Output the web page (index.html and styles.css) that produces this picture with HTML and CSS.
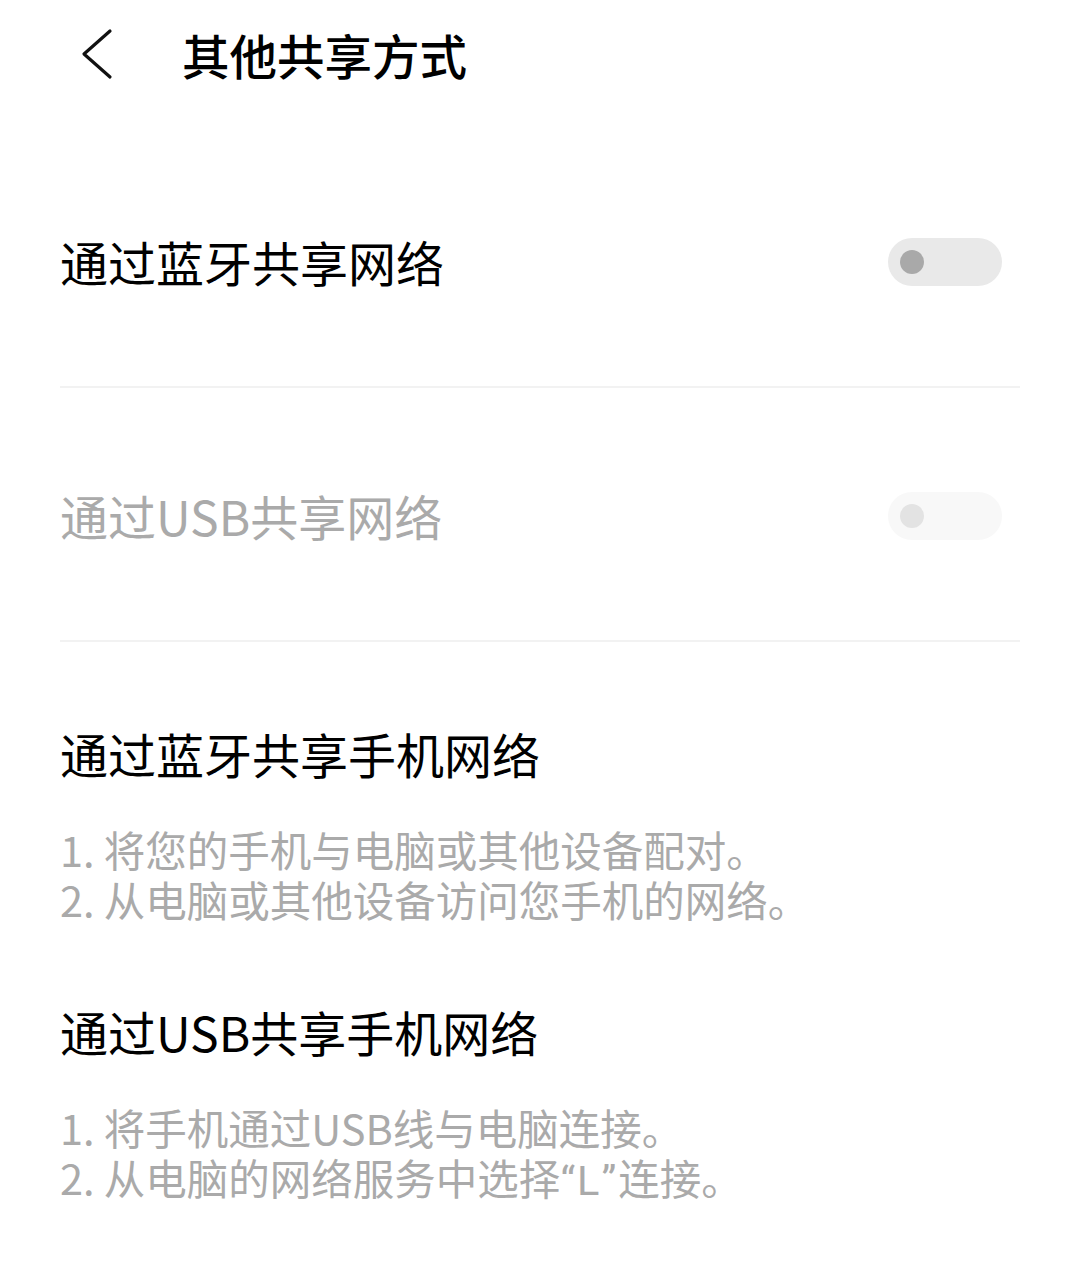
FILE: index.html
```html
<!DOCTYPE html>
<html lang="zh-CN">
<head>
<meta charset="utf-8">
<link rel="stylesheet" href="styles.css">
</head>
<body>
<div class="page">
  <header class="header">
    <svg class="back" width="40" height="56" viewBox="0 0 40 56">
      <path d="M30 4 L4 27 L30 50" fill="none" stroke="#111" stroke-width="3.2" stroke-linecap="round" stroke-linejoin="round"/>
    </svg>
    <h1 class="title">其他共享方式</h1>
  </header>
  <div class="list">
    <div class="row">
      <span class="row-label">通过蓝牙共享网络</span>
      <span class="toggle"><span class="knob"></span></span>
    </div>
    <div class="row row-disabled">
      <span class="row-label">通过USB共享网络</span>
      <span class="toggle"><span class="knob"></span></span>
    </div>
  </div>
  <section class="section first">
    <h2 class="section-title">通过蓝牙共享手机网络</h2>
    <p class="desc">1. 将您的手机与电脑或其他设备配对。<br>2. 从电脑或其他设备访问您手机的网络。</p>
  </section>
  <section class="section">
    <h2 class="section-title">通过USB共享手机网络</h2>
    <p class="desc">1. 将手机通过USB线与电脑连接。<br>2. 从电脑的网络服务中选择<span class="q">“L”</span>连接。</p>
  </section>
</div>
</body>
</html>
```
FILE: styles.css
```css
html, body {
  margin: 0;
  padding: 0;
  background: #fff;
}
body {
  font-family: "Noto Sans CJK SC", "Noto Sans", sans-serif;
  color: #000;
}
.page {
  width: 1080px;
  height: 1269px;
  padding: 0 60px;
  box-sizing: border-box;
}
.header {
  height: 110px;
  display: flex;
  align-items: center;
}
.back {
  margin-left: 20px;
  margin-right: 62px;
  display: block;
}
.title {
  margin: 0;
  font-size: 47.5px;
  font-weight: 500;
  line-height: 60px;
}
.list {
  margin-top: 24px;
}
.row {
  height: 254px;
  display: flex;
  align-items: center;
  justify-content: space-between;
  border-bottom: 2px solid #f2f2f2;
  box-sizing: border-box;
}
.row-label {
  font-size: 48px;
  line-height: 60px;
  margin-top: 2px;
  color: #000;
}
.toggle {
  width: 114px;
  height: 48px;
  border-radius: 24px;
  background: #e9e9e9;
  margin-right: 18px;
  margin-top: 4px;
  display: flex;
  align-items: center;
}
.knob {
  width: 24px;
  height: 24px;
  border-radius: 50%;
  background: #a9a9a9;
  margin-left: 12px;
}
.row-disabled .row-label {
  color: #aaa;
}
.row-disabled .toggle {
  background: #f8f8f8;
}
.row-disabled .knob {
  background: #e3e3e3;
}
.section.first {
  margin-top: 81px;
}
.section {
  margin-top: 77px;
}
.section-title {
  margin: 0;
  font-size: 48px;
  font-weight: 400;
  line-height: 60px;
}
.desc {
  margin: 41px 0 0;
  font-size: 41.5px;
  line-height: 50px;
  color: #aaa;
}
.q {
  font-family: "Roboto", "Noto Sans", sans-serif;
  letter-spacing: 2px;
}
```
